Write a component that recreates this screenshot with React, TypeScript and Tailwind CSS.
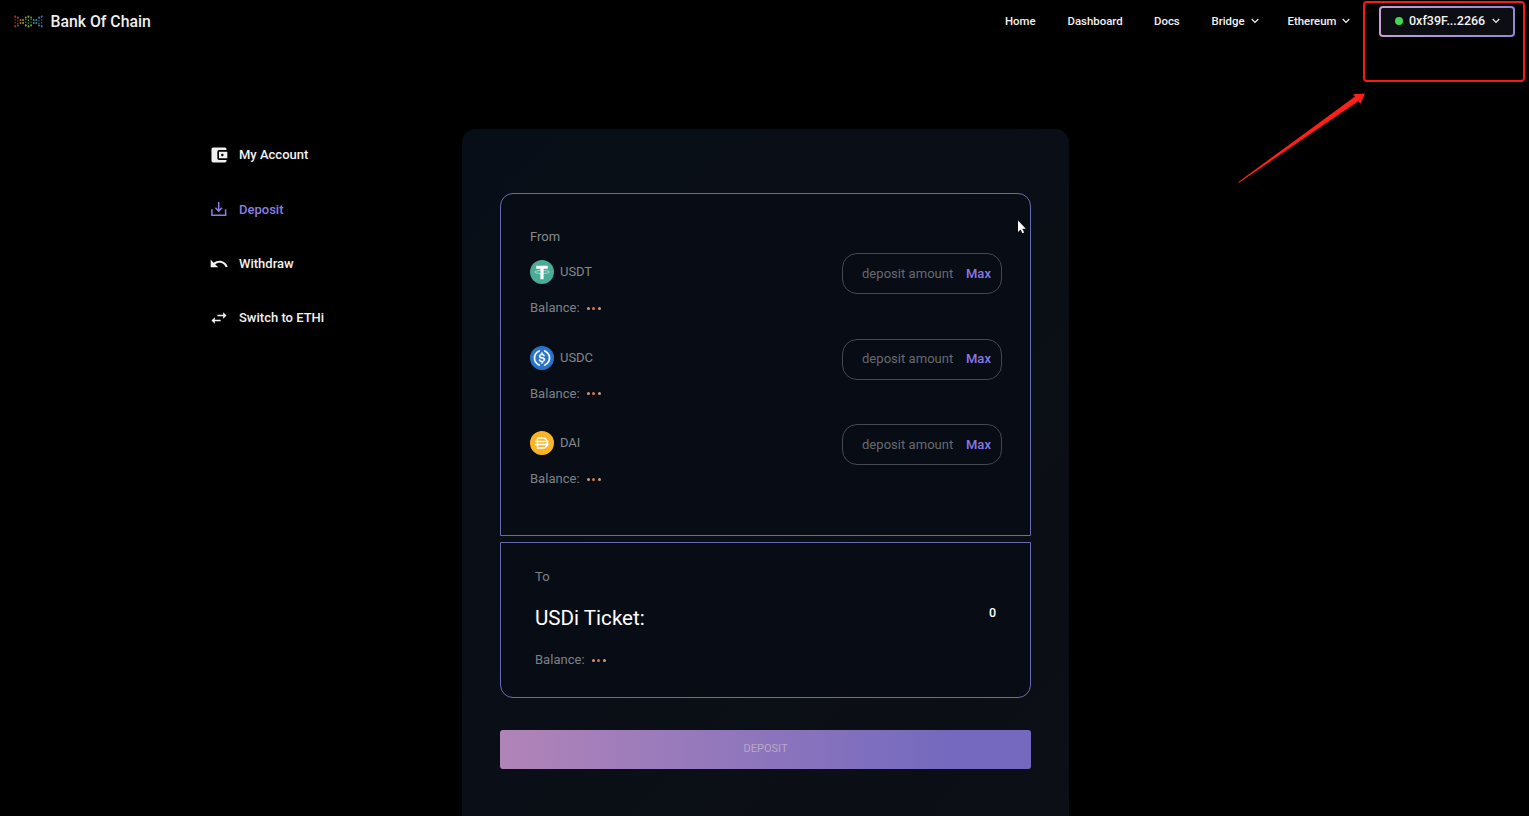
import type { ReactNode } from "react";
import { MdAccountBalanceWallet, MdSwapHoriz, MdUndo } from "react-icons/md";

function Chevron() {
  return (
    <svg width="8" height="6" viewBox="0 0 8 6" fill="none" stroke="currentColor" strokeWidth="1.2">
      <path d="M0.7 1 4 4.3 7.3 1" />
    </svg>
  );
}

const strandColors = ["#c9362c", "#cf4a2e", "#c98a34", "#b5b03a", "#86c23e", "#7cc544", "#5fb75a", "#44b088", "#3a9fc0", "#3a93d4", "#3a8ad0"];

function Logo() {
  const dots: ReactNode[] = [];
  strandColors.forEach((color, i) => {
    const x = 1.2 + i * 2.65;
    const offset = Math.cos((i / 10) * Math.PI * 2) * 5;
    dots.push(<circle key={`a${i}`} cx={x} cy={6.5 + offset} r="1" fill={color} />);
    dots.push(<circle key={`b${i}`} cx={x} cy={6.5 - offset} r="1" fill={color} />);
    if (Math.abs(offset) > 3) {
      dots.push(
        <path key={`c${i}`} d={`M${x} ${6.5 - offset}V${6.5 + offset}`} stroke={color} strokeWidth="1.1" strokeDasharray="1.3 1.5" />
      );
    }
  });
  return (
    <svg width="29" height="13" viewBox="0 0 29 13" className="opacity-85">
      {dots}
    </svg>
  );
}

function DepositIcon() {
  return (
    <svg width="20" height="20" viewBox="0 0 20 20" fill="none" stroke="currentColor" strokeWidth="1.5">
      <path d="M2.9 10.2V16.3H16.6V10.2M9.7 3V12M6.4 8.8 9.7 12.1 13 8.8" />
    </svg>
  );
}

function Usdt() {
  return (
    <svg width="24" height="24" viewBox="0 0 32 32">
      <circle cx="16" cy="16" r="16" fill="#4aac97" />
      <ellipse cx="16" cy="16" rx="10" ry="2" fill="none" stroke="#fff" strokeOpacity="0.65" strokeWidth="1" />
      <path d="M8.3 7.5H23.7V11.8H18.1V25.5H13.9V11.8H8.3Z" fill="#fff" />
    </svg>
  );
}

function Usdc() {
  return (
    <svg width="24" height="24" viewBox="0 0 32 32">
      <circle cx="16" cy="16" r="16" fill="#2873c9" />
      <g fill="#fff" stroke="#fff" strokeWidth="0.5">
        <path d="M20.022 18.124c0-2.124-1.28-2.852-3.84-3.156-1.828-.243-2.193-.728-2.193-1.578 0-.85.61-1.396 1.828-1.396 1.097 0 1.707.364 2.011 1.275a.458.458 0 0 0 .427.303h.975a.416.416 0 0 0 .427-.425v-.06a3.04 3.04 0 0 0-2.743-2.489V9.142c0-.243-.183-.425-.487-.486h-.915c-.243 0-.426.182-.487.486v1.396c-1.829.242-2.986 1.456-2.986 2.974 0 2.002 1.218 2.791 3.778 3.095 1.707.303 2.255.668 2.255 1.639 0 .97-.853 1.638-2.011 1.638-1.585 0-2.133-.667-2.316-1.578-.06-.242-.244-.364-.427-.364h-1.036a.416.416 0 0 0-.426.425v.06c.243 1.518 1.219 2.61 3.23 2.914v1.457c0 .242.183.425.487.485h.915c.243 0 .426-.182.487-.485V21.34c1.829-.303 3.047-1.578 3.047-3.217z" />
        <path d="M12.892 24.497c-4.754-1.7-7.192-6.98-5.424-11.653.914-2.55 2.925-4.491 5.424-5.402.244-.121.365-.303.365-.607v-.85c0-.242-.121-.424-.365-.485-.061 0-.183 0-.244.06a10.895 10.895 0 0 0-7.13 13.717c1.096 3.4 3.717 6.01 7.13 7.102.244.121.488 0 .548-.243.061-.06.061-.122.061-.243v-.85c0-.182-.182-.424-.365-.546zm6.46-18.936c-.244-.122-.488 0-.548.242-.061.061-.061.122-.061.243v.85c0 .243.182.485.365.607 4.754 1.7 7.192 6.98 5.424 11.653-.914 2.55-2.925 4.491-5.424 5.402-.244.121-.365.303-.365.607v.85c0 .242.121.424.365.485.061 0 .183 0 .244-.06a10.895 10.895 0 0 0 7.13-13.717c-1.096-3.46-3.778-6.07-7.13-7.162z" />
      </g>
    </svg>
  );
}

function Dai() {
  return (
    <svg width="24" height="24" viewBox="0 0 32 32">
      <circle cx="16" cy="16" r="16" fill="#fcb424" />
      <path d="M10 9.3H16C20.5 9.3 23.2 12 23.2 16S20.5 22.7 16 22.7H10ZM7 14H25M7 18H25" fill="none" stroke="#fff" strokeWidth="1.9" />
    </svg>
  );
}

function Balance() {
  return (
    <div className="flex h-4 items-center text-[13px] leading-4 tracking-[0.02px] text-[#7d8187]">
      <span>Balance:</span>
      <span className="ml-[7px] flex gap-[2.5px]">
        <i className="size-[3px] rounded-full bg-[#d49472]" />
        <i className="size-[3px] rounded-full bg-[#dc7041]" />
        <i className="size-[3px] rounded-full bg-[#cf9a80]" />
      </span>
    </div>
  );
}

function TokenRow({ icon, name }: { icon: ReactNode; name: string }) {
  return (
    <div className="flex h-[85.6px] justify-between">
      <div className="pt-[7px]">
        <div className="flex h-6 items-center gap-[6px] text-[13px] tracking-[-0.05px] text-[#84888d]">
          {icon}
          <span>{name}</span>
        </div>
        <div className="mt-4">
          <Balance />
        </div>
      </div>
      <div className="flex h-[41px] w-[160px] items-center justify-between rounded-[15px] border border-[#44494f] pr-[10px] pl-[19px] text-[13px]">
        <span className="tracking-[0.04px] text-[#666a70]">deposit amount</span>
        <span className="font-medium tracking-[0.05px] text-[#8778e6]">Max</span>
      </div>
    </div>
  );
}

const menu = [
  { label: "My Account", icon: <MdAccountBalanceWallet size={20} />, color: "text-[#f2f2f2]" },
  { label: "Deposit", icon: <DepositIcon />, color: "text-[#8b7ee0]" },
  { label: "Withdraw", icon: <MdUndo size={20} />, color: "text-[#f2f2f2]" },
  { label: "Switch to ETHi", icon: <MdSwapHoriz size={20} />, color: "text-[#f2f2f2]" },
];

export default function App() {
  return (
    <div className="relative flex h-[816px] w-[1529px] flex-col overflow-hidden bg-black font-['Roboto',sans-serif]">
      <header className="flex h-[42px] shrink-0 items-center justify-between pr-[14px] pl-[14px]">
        <div className="flex items-center gap-[7.5px] text-[15.8px] font-medium text-[#eeeeee]">
          <Logo />
          <span className="pt-px">Bank Of Chain</span>
        </div>
        <div className="flex items-center text-[11.4px] font-medium text-[#f2f2f2]">
          <nav className="grid grid-cols-[62.5px_86.5px_57.5px_76px_91.5px] items-center pt-px">
            <a>Home</a>
            <a>Dashboard</a>
            <a>Docs</a>
            <a className="flex items-center gap-[6px]">Bridge <Chevron /></a>
            <a className="flex items-center gap-[6px]">Ethereum <Chevron /></a>
          </nav>
          <button className="h-[31px] w-[136px] rounded-[4px] bg-linear-to-r from-[#c8a0d4] to-[#8f88d8] p-[2px]">
            <span className="flex h-full items-center rounded-[2px] bg-[#0d0e14] pl-[14px] text-[12.5px]">
              <i className="mr-[6px] size-2 rounded-full bg-[#44d751]" />
              <span className="mr-[7px]">0xf39F...2266</span>
              <Chevron />
            </span>
          </button>
        </div>
      </header>

      <div className="flex flex-1 pt-[87px]">
        <aside className="w-[462px] pt-4 pl-[209px]">
          {menu.map((item) => (
            <div key={item.label} className={`mb-[34.3px] flex h-5 items-center gap-[10px] text-[13px] font-medium ${item.color}`}>
              {item.icon}
              <span>{item.label}</span>
            </div>
          ))}
        </aside>

        <main className="w-[607px] rounded-t-[14px] bg-linear-to-br from-[#080e17] to-[#0c0f15] px-[38px] pt-16">
          <section className="h-[343px] rounded-t-[13px] border border-[#686aae] bg-[#080d15] pt-[35px] pr-[28px] pl-[29px]">
            <div className="mb-[8px] h-4 text-[13px] leading-4 text-[#84888d]">From</div>
            <TokenRow icon={<Usdt />} name="USDT" />
            <TokenRow icon={<Usdc />} name="USDC" />
            <TokenRow icon={<Dai />} name="DAI" />
          </section>
          <section className="mt-[6px] h-[156px] rounded-b-[13px] border border-[#686aae] bg-[#080d15] px-[34px] pt-[26px]">
            <div className="h-4 text-[13px] leading-4 text-[#7d8187]">To</div>
            <div className="mt-[18px] flex h-[31px] justify-between text-white">
              <span className="text-[20.6px] leading-[30px]">USDi Ticket:</span>
              <span className="text-[12.5px] leading-[19px] font-medium">0</span>
            </div>
            <div className="mt-[18px]">
              <Balance />
            </div>
          </section>
          <button className="mt-8 flex h-[39px] w-full items-center justify-center rounded-[3px] bg-linear-to-r from-[#b184b8] to-[#7469bf] to-85% text-[11px] text-[#b9a7c6]">
            DEPOSIT
          </button>
        </main>
      </div>

      <div className="absolute top-px left-[1363px] h-[81px] w-[162px] rounded-[4px] border-2 border-[#f51d12]" />
      <svg className="absolute top-[90px] left-[1235px]" width="134" height="96" viewBox="0 0 134 96">
        <path d="M3 92.3 120 6.5 118 4.3 130 3.5 125.3 14 123.5 11 4 92.8Z" fill="#ff2015" />
      </svg>
      <svg className="absolute top-[220px] left-[1017px]" width="9" height="14" viewBox="0 0 9 14">
        <path d="M1 0.5V12L3.6 9.5 5.4 13.2 7.1 12.4 5.4 8.7H8.8Z" fill="#fff" />
      </svg>
    </div>
  );
}
